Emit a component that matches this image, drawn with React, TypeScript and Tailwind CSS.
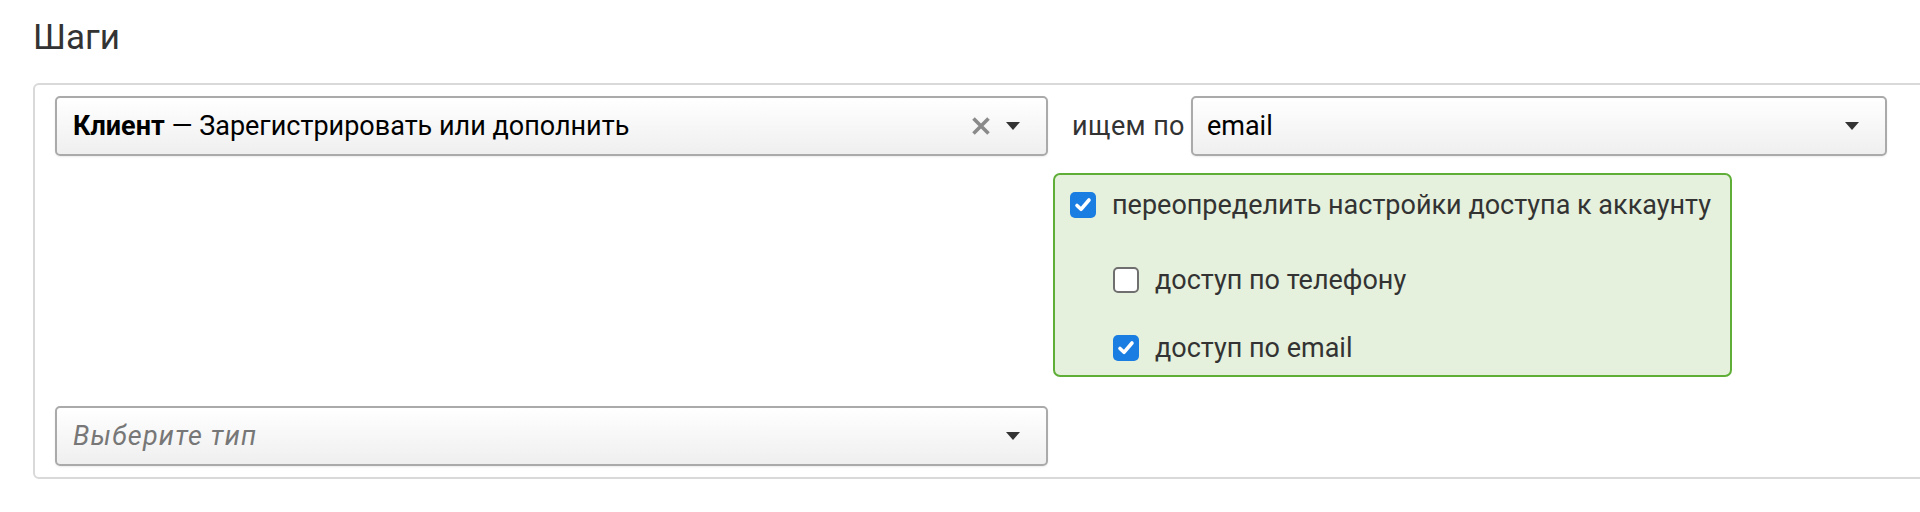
import React from "react";

function Caret() {
  return (
    <svg width="14" height="8" viewBox="0 0 14 8" className="shrink-0">
      <path d="M0 0 L14 0 L7 8 Z" fill="#333" />
    </svg>
  );
}

function CloseX() {
  return (
    <svg width="20" height="20" viewBox="0 0 20 20" className="shrink-0">
      <path d="M2.5 2.5 L17.5 17.5 M17.5 2.5 L2.5 17.5" stroke="#8a8a8a" strokeWidth="3.6" strokeLinecap="butt" />
    </svg>
  );
}

function Check({ checked }: { checked: boolean }) {
  if (!checked) {
    return <div className="w-[26px] h-[26px] shrink-0 rounded-[5px] border-2 border-[#6f6f6f] bg-white" />;
  }
  return (
    <div className="w-[26px] h-[26px] shrink-0 rounded-[5px] bg-[#1a7de2] flex items-center justify-center">
      <svg width="22" height="22" viewBox="0 0 22 22">
        <path d="M5 11.5 L9 15.3 L17 6" fill="none" stroke="#fff" strokeWidth="3.6" strokeLinecap="round" strokeLinejoin="round" />
      </svg>
    </div>
  );
}

const selectCls =
  "h-[60px] flex items-center rounded-[5px] border-2 border-[#aaaaaa] bg-gradient-to-b from-white via-[#f7f7f7] to-[#efefef] shadow-[0_1px_2px_rgba(0,0,0,0.08)]";

export default function App() {
  return (
    <div className="w-[1920px] h-[512px] overflow-hidden bg-white font-[Roboto,sans-serif] text-[#333]">
      <div className="pt-[20px] pl-[33px] text-[35px] leading-[36px] text-[#333]">Шаги</div>
      <div className="mt-[27px] ml-[33px] w-[1920px] rounded-[6px] border-2 border-[#d9d9d9] pt-[11px] pl-[20px] pb-[11px]">
        <div className="flex items-start">
          <div className={`${selectCls} w-[993px] pl-[16px] pr-[26px]`}>
            <div className="flex-1 text-[27px] text-black whitespace-nowrap">
              <span className="font-bold">Клиент</span> — Зарегистрировать или дополнить
            </div>
            <CloseX />
            <div className="w-[15px]" />
            <Caret />
          </div>
          <div className="ml-[5px] w-[834px] flex flex-col">
            <div className="flex items-center">
              <div className="pl-[19px] pr-[6px] text-[27px] tracking-[0.4px] text-[#333] whitespace-nowrap">ищем по</div>
              <div className={`${selectCls} flex-1 pl-[14px] pr-[26px]`}>
                <div className="flex-1 text-[27px] text-black">email</div>
                <Caret />
              </div>
            </div>
            <div className="mt-[17px] w-[679px] rounded-[7px] border-2 border-[#5fae38] bg-[#e5f1dc] pt-[17px] pl-[15px] pb-[14px] text-[27px] text-[#333]">
              <div className="flex items-center h-[26px]">
                <Check checked={true} />
                <span className="ml-[16px] whitespace-nowrap">переопределить настройки доступа к аккаунту</span>
              </div>
              <div className="flex items-center h-[26px] mt-[49px] ml-[43px]">
                <Check checked={false} />
                <span className="ml-[16px] whitespace-nowrap">доступ по телефону</span>
              </div>
              <div className="flex items-center h-[26px] mt-[42px] ml-[43px]">
                <Check checked={true} />
                <span className="ml-[16px] whitespace-nowrap">доступ по email</span>
              </div>
            </div>
          </div>
        </div>
        <div className={`${selectCls} mt-[29px] w-[993px] pl-[16px] pr-[26px]`}>
          <div className="flex-1 text-[27px] italic tracking-[1.2px] text-[#777]">Выберите тип</div>
          <Caret />
        </div>
      </div>
    </div>
  );
}
